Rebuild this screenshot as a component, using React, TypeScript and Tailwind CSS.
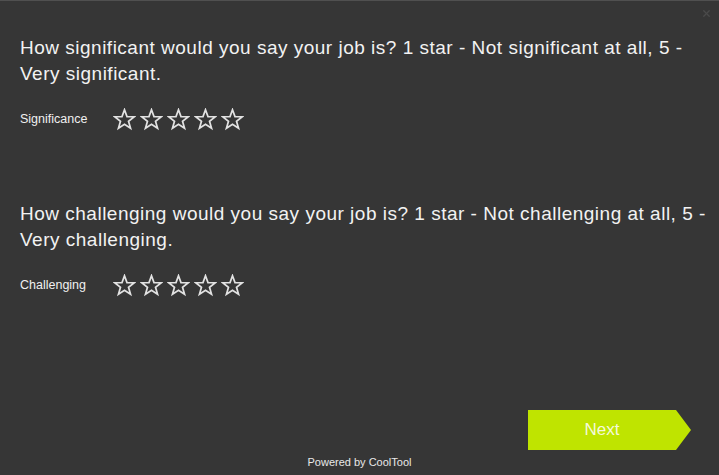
import { X } from "lucide-react";

const questions = [
  {
    text: "How significant would you say your job is? 1 star - Not significant at all, 5 - Very significant.",
    label: "Significance",
  },
  {
    text: "How challenging would you say your job is? 1 star - Not challenging at all, 5 - Very challenging.",
    label: "Challenging",
  },
];

function StarIcon() {
  return (
    <svg width="23" height="23" viewBox="0 0 24 24" className="block">
      <polygon
        points="12,1.8 14.6,8.9 22.2,9.1 16.2,13.8 18.3,21.2 12,16.9 5.7,21.2 7.8,13.8 1.8,9.1 9.4,8.9"
        fill="none"
        stroke="#e2e2e2"
        strokeWidth="1.8"
        strokeLinejoin="miter"
      />
    </svg>
  );
}

function Question({ text, label }: { text: string; label: string }) {
  return (
    <div className="flex flex-col">
      <p className="text-[19px] leading-[26px] tracking-[0.5px] text-[#f2f2f2] pr-[8px]">{text}</p>
      <div className="flex items-center mt-[21px] gap-[27px]">
        <span className="text-[12.5px] text-[#f0f0f0] w-[66px]">{label}</span>
        <div className="flex gap-[4px]">
          {[0, 1, 2, 3, 4].map((i) => (
            <StarIcon key={i} />
          ))}
        </div>
      </div>
    </div>
  );
}

export default function App() {
  return (
    <div
      className="w-[719px] h-[475px] bg-[#363636] border-t border-[#505050] relative flex flex-col"
      style={{ fontFamily: '"Liberation Sans", Arial, sans-serif' }}
    >
      <button className="absolute top-[7px] right-[7px] text-[#4a4a4a]">
        <X size={11} strokeWidth={3} />
      </button>

      <div className="flex flex-col gap-[70px] pl-[20px] pt-[34px]">
        {questions.map((q) => (
          <Question key={q.label} text={q.text} label={q.label} />
        ))}
      </div>

      <div className="flex-1" />

      <div className="flex justify-end pr-[28px]">
        <button className="relative h-[40px] w-[163px] flex items-center">
          <svg width="163" height="40" viewBox="0 0 163 40" className="absolute inset-0">
            <polygon points="0,0 148,0 163,20 148,40 0,40" fill="#bfe400" />
          </svg>
          <span className="relative w-[148px] text-center text-[17px] text-[#f4f9dc]">Next</span>
        </button>
      </div>

      <div className="text-center text-[11px] text-[#e8e8e8] pt-[4px] pb-[5px]">Powered by CoolTool</div>
    </div>
  );
}
